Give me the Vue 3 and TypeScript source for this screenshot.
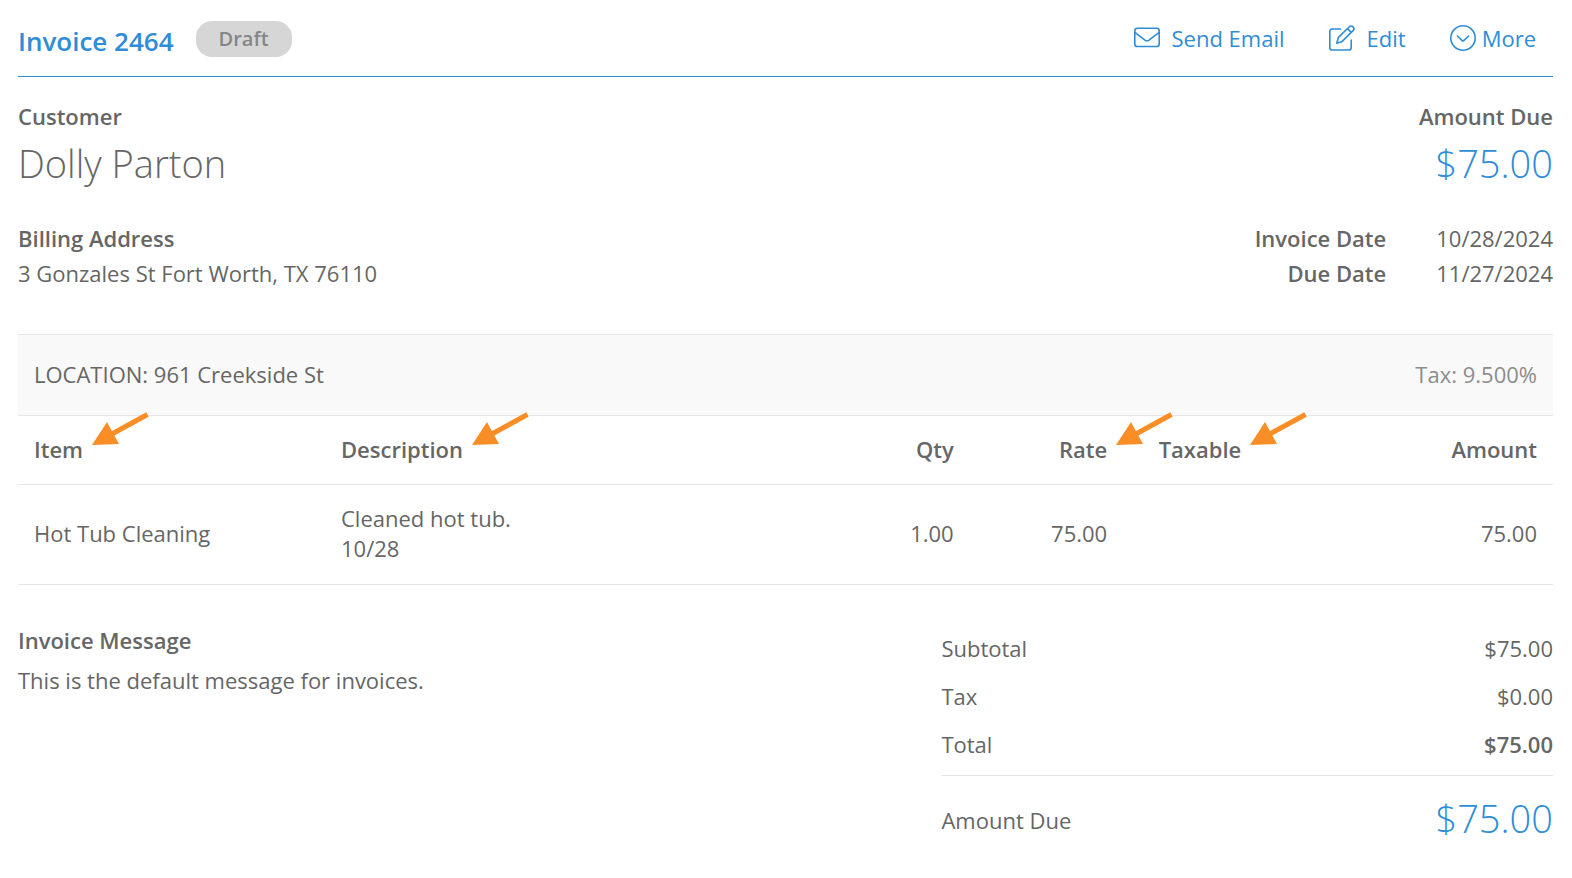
<script setup lang="ts">
interface Column {
  key: string
  label: string
  align: 'start' | 'end' | 'middle'
  marked: boolean
}

interface LineItem {
  item: string
  description: string
  qty: string
  rate: string
  amount: string
}

const columns: Column[] = [
  { key: 'item', label: 'Item', align: 'start', marked: true },
  { key: 'description', label: 'Description', align: 'start', marked: true },
  { key: 'qty', label: 'Qty', align: 'end', marked: false },
  { key: 'rate', label: 'Rate', align: 'end', marked: true },
  { key: 'taxable', label: 'Taxable', align: 'middle', marked: true },
  { key: 'amount', label: 'Amount', align: 'end', marked: false },
]

const lines: LineItem[] = [
  { item: 'Hot Tub Cleaning', description: 'Cleaned hot tub.\n10/28', qty: '1.00', rate: '75.00', amount: '75.00' },
]

const totals = [
  { label: 'Subtotal', value: '$75.00', strong: false },
  { label: 'Tax', value: '$0.00', strong: false },
  { label: 'Total', value: '$75.00', strong: true },
]
</script>

<template>
  <main class="invoice">
    <header class="topbar">
      <h1 class="title">Invoice 2464</h1>
      <span class="badge">Draft</span>
      <nav class="actions">
        <button type="button" class="action">
          <svg class="icon" viewBox="0 0 26 26" aria-hidden="true">
            <rect x="0.8" y="3.3" width="24.4" height="18.2" rx="2.6" />
            <path d="M1.2 7.7 L11 15.1 Q13 16.5 15 15.1 L24.8 7.7" />
          </svg>
          Send Email
        </button>
        <button type="button" class="action">
          <svg class="icon" viewBox="0 0 26 26" aria-hidden="true">
            <path d="M11.6 4 H3.4 Q0.8 4 0.8 6.6 V22.4 Q0.8 25 3.4 25 H19.6 Q22.2 25 22.2 22.4 V15" />
            <path d="M7.8 18.2 L9.4 12.4 L20.4 1.7 Q22.2 0.2 24 1.9 Q25.8 3.7 24.3 5.4 L13.2 16.4 Z M18.4 3.7 L22.3 7.4" />
          </svg>
          Edit
        </button>
        <button type="button" class="action more">
          <svg class="icon" viewBox="0 0 26 26" aria-hidden="true">
            <circle cx="13" cy="13" r="12.2" />
            <path d="M7.4 11 L12.2 15.6 Q13 16.3 13.8 15.6 L18.6 11" />
          </svg>
          More
        </button>
      </nav>
    </header>

    <section class="summary">
      <div>
        <h2 class="label">Customer</h2>
        <p class="display">Dolly Parton</p>
      </div>
      <div class="right">
        <h2 class="label">Amount Due</h2>
        <p class="display accent">$75.00</p>
      </div>
    </section>

    <section class="details">
      <div>
        <h2 class="label">Billing Address</h2>
        <p class="text">3 Gonzales St Fort Worth, TX 76110</p>
      </div>
      <dl class="dates">
        <dt>Invoice Date</dt>
        <dd>10/28/2024</dd>
        <dt>Due Date</dt>
        <dd>11/27/2024</dd>
      </dl>
    </section>

    <div class="location">
      <span>LOCATION: 961 Creekside St</span>
      <span class="rate">Tax: 9.500%</span>
    </div>

    <table class="lines">
      <colgroup>
        <col v-for="c in columns" :key="c.key" :class="'col-' + c.key" />
      </colgroup>
      <thead>
        <tr>
          <th v-for="c in columns" :key="c.key" scope="col" :class="c.align">
            <span class="heading">
              {{ c.label }}
              <svg v-if="c.marked" class="arrow" viewBox="0 0 57 34" aria-hidden="true">
                <path class="shaft" d="M55.5 2.5 L18 23" />
                <path class="head" d="M0 33 L15 10 L27 32 Z" />
              </svg>
            </span>
          </th>
        </tr>
      </thead>
      <tbody>
        <tr v-for="line in lines" :key="line.item">
          <td>{{ line.item }}</td>
          <td class="multiline">{{ line.description }}</td>
          <td class="end">{{ line.qty }}</td>
          <td class="end">{{ line.rate }}</td>
          <td></td>
          <td class="end">{{ line.amount }}</td>
        </tr>
      </tbody>
    </table>

    <section class="footer">
      <div class="message">
        <h2 class="label">Invoice Message</h2>
        <p class="text">This is the default message for invoices.</p>
      </div>
      <dl class="totals">
        <div v-for="t in totals" :key="t.label" class="total">
          <dt>{{ t.label }}</dt>
          <dd :class="{ strong: t.strong }">{{ t.value }}</dd>
        </div>
        <div class="total due">
          <dt>Amount Due</dt>
          <dd class="display accent">$75.00</dd>
        </div>
      </dl>
    </section>
  </main>
</template>

<style>
body {
  background: #fff;
}
</style>

<style scoped>
.invoice {
  padding: 0 19px 20px 18px;
  font-family: "Open Sans", "Noto Sans", sans-serif;
  font-size: 22px;
  line-height: 30px;
  color: #666;
}
h1,
h2,
p,
dl,
dd {
  margin: 0;
}
.topbar {
  display: flex;
  align-items: center;
  padding: 21px 0 19px;
  border-bottom: 1px solid #2f8dd6;
}
.title {
  padding-top: 4px;
  font-size: 26px;
  font-weight: 600;
  color: #2f8dd6;
}
.badge {
  margin-left: 22px;
  padding: 0 23px;
  border-radius: 16px;
  background: #d6d6d6;
  color: #858585;
  font-size: 20px;
  font-weight: 600;
  line-height: 36px;
}
.actions {
  display: flex;
  gap: 44px;
  margin-left: auto;
  padding: 0 17px 2px 0;
}
.action {
  display: flex;
  align-items: center;
  gap: 12px;
  padding: 0;
  border: 0;
  background: none;
  color: #2f8dd6;
  font: inherit;
  cursor: pointer;
}
.more {
  gap: 6px;
}
.icon {
  width: 26px;
  height: 26px;
  fill: none;
  stroke: currentColor;
  stroke-width: 1.6;
  stroke-linecap: round;
  stroke-linejoin: round;
}
.summary,
.details {
  display: flex;
  justify-content: space-between;
}
.summary {
  padding-top: 24px;
}
.right {
  text-align: right;
}
.label {
  font-size: 22px;
  font-weight: 600;
}
.display {
  font-size: 38px;
  font-weight: 300;
  line-height: 64px;
}
.accent {
  color: #2f8dd6;
}
.details {
  padding: 26px 0 43px;
  line-height: 35px;
}
.dates {
  display: grid;
  grid-template-columns: auto auto;
  column-gap: 50px;
  text-align: right;
}
.dates dt {
  font-weight: 600;
}
.location {
  display: flex;
  justify-content: space-between;
  padding: 24px 16px 26px;
  border: 1px solid #e6e6e6;
  border-width: 1px 0;
  background: #f9f9f9;
}
.rate {
  color: #8c8c8c;
}
.lines {
  width: 100%;
  table-layout: fixed;
  border-collapse: collapse;
}
.col-item {
  width: 20%;
}
.col-description {
  width: 32%;
}
.col-qty,
.col-rate,
.col-taxable {
  width: 10%;
}
.col-amount {
  width: 18%;
}
th,
td {
  padding: 18px 16px 20px;
  border-bottom: 1px solid #e6e6e6;
  text-align: left;
}
td {
  padding-bottom: 21px;
}
th {
  font-weight: 600;
}
.middle {
  text-align: center;
}
.end {
  text-align: right;
}
.multiline {
  white-space: pre-line;
}
.heading {
  position: relative;
}
.arrow {
  position: absolute;
  left: calc(100% + 9px);
  bottom: 18px;
  width: 57px;
  height: 34px;
}
.shaft {
  stroke: #fa8e26;
  stroke-width: 5;
}
.head {
  fill: #fa8e26;
}
.footer {
  display: grid;
  grid-template-columns: 3fr 2fr;
  column-gap: 6px;
  padding-top: 40px;
}
.message .text {
  padding-top: 10px;
}
.total {
  display: flex;
  align-items: center;
  justify-content: space-between;
  padding: 8px 0 10px;
}
.strong {
  font-weight: 600;
}
.due {
  margin-top: 6px;
  padding: 10px 0;
  border-top: 1px solid #e6e6e6;
}
.due dt {
  padding-top: 4px;
}
</style>
